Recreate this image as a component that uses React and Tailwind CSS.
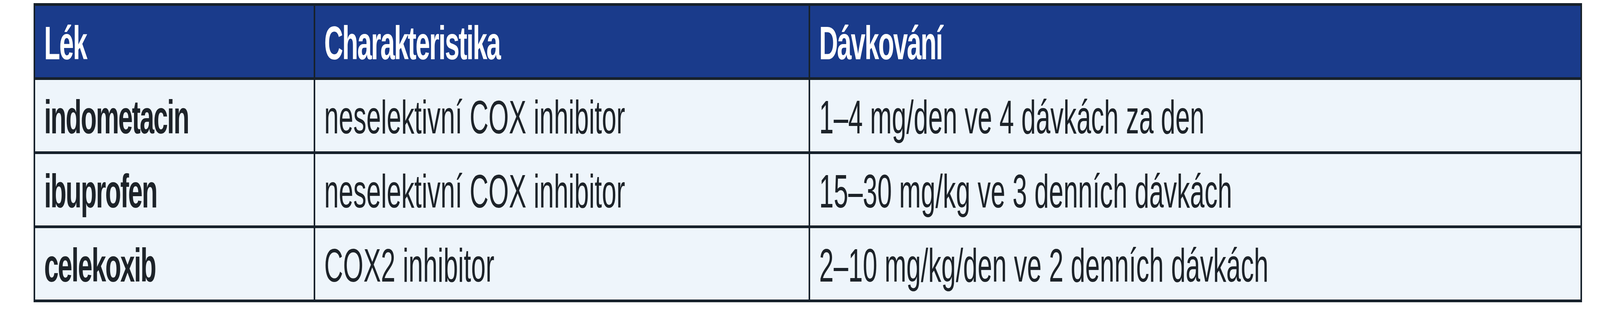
import React from "react";

const rows = [
  {
    lek: "indometacin",
    char: "neselektivní COX inhibitor",
    davka: "1–4 mg/den ve 4 dávkách za den",
  },
  {
    lek: "ibuprofen",
    char: "neselektivní COX inhibitor",
    davka: "15–30 mg/kg ve 3 denních dávkách",
  },
  {
    lek: "celekoxib",
    char: "COX2 inhibitor",
    davka: "2–10 mg/kg/den ve 2 denních dávkách",
  },
];

function Txt({ children, bold }) {
  return (
    <span
      className={
        "inline-block origin-left scale-x-[0.558] " +
        (bold ? "font-bold tracking-[-4px]" : "font-normal")
      }
    >
      {children}
    </span>
  );
}

export default function App() {
  const cell =
    "border-x-[4px] border-y-[7px] border-[#17212b] h-[190px] pl-[23px] pt-[35px] align-top text-left text-[120px] leading-[120px] whitespace-nowrap overflow-hidden";

  return (
    <div className="bg-white w-full h-[800px] pt-[8px] pl-[86px] overflow-hidden font-['Liberation_Sans',Arial,sans-serif]">
      <table className="table-fixed border-collapse w-[3964px]">
        <colgroup>
          <col className="w-[717px]" />
          <col className="w-[1267px]" />
          <col />
        </colgroup>

        {/* HEADER */}
        <thead className="bg-[#1a3b8b] text-white">
          <tr>
            <th className={cell}>
              <Txt bold>Lék</Txt>
            </th>
            <th className={cell}>
              <Txt bold>Charakteristika</Txt>
            </th>
            <th className={cell}>
              <Txt bold>Dávkování</Txt>
            </th>
          </tr>
        </thead>

        {/* BODY */}
        <tbody className="bg-[#eef5fb] text-[#1d2329]">
          {rows.map((r, i) => (
            <tr key={i}>
              <td className={cell}>
                <Txt bold>{r.lek}</Txt>
              </td>
              <td className={cell}>
                <Txt>{r.char}</Txt>
              </td>
              <td className={cell}>
                <Txt>{r.davka}</Txt>
              </td>
            </tr>
          ))}
        </tbody>
      </table>
    </div>
  );
}
